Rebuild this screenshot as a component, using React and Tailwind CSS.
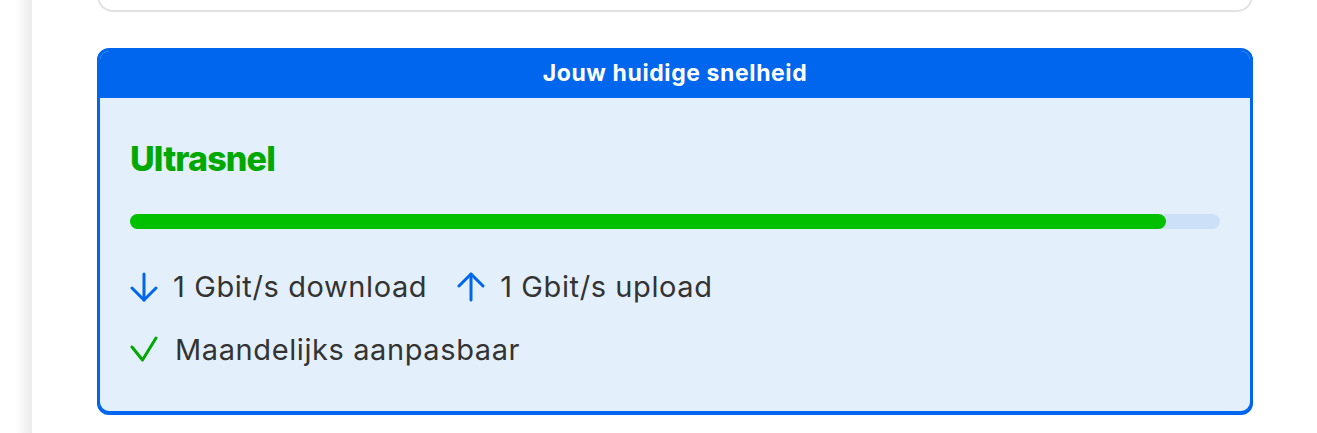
import React from "react";

const ArrowDown = () => (
  <svg width="28" height="30" viewBox="0 0 28 30" fill="none" stroke="#0066EE" strokeWidth="3" strokeLinecap="round" strokeLinejoin="round">
    <path d="M14 2v26" />
    <path d="M2 16l12 12 12-12" />
  </svg>
);

const ArrowUp = () => (
  <svg width="28" height="30" viewBox="0 0 28 30" fill="none" stroke="#0066EE" strokeWidth="3" strokeLinecap="round" strokeLinejoin="round">
    <path d="M14 28V2" />
    <path d="M2 14L14 2l12 12" />
  </svg>
);

const Check = () => (
  <svg width="28" height="28" viewBox="0 0 28 28" fill="none" stroke="#00A800" strokeWidth="3" strokeLinecap="round" strokeLinejoin="round">
    <path d="M2 11l10.5 13L26 2" />
  </svg>
);

const speed = 95;

export default function App() {
  return (
    <div className="flex h-[433px] w-full overflow-hidden bg-white font-['Inter',sans-serif]">
      {/* left page shadow */}
      <div className="w-[32px] shrink-0 bg-gradient-to-r from-white via-white to-[#ebebeb]" />

      <div className="flex-1 pl-[65px] pr-[64px]">
        {/* previous card (only bottom visible) */}
        <div className="mt-[-30px] h-[42px] rounded-[16px] border-2 border-[#e2e2e2] bg-white" />

        {/* current speed card */}
        <div className="mt-[36px] overflow-hidden rounded-[12px] border-[3px] border-[#0066EE] bg-[#E3F0FB] shadow-[0_1px_0_#0066EE]">
          <div className="-mx-[3px] -mt-[3px] flex h-[50px] items-center justify-center bg-[#0066EE]">
            <span className="text-[23px] font-bold tracking-[0.6px] text-white">Jouw huidige snelheid</span>
          </div>

          <div className="px-[30px] pt-[44px] pb-[43px]">
            <h2 className="text-[34px] font-extrabold leading-[34px] tracking-tight text-[#00A800]">Ultrasnel</h2>

            <div className="mt-[38px] h-[15px] w-full rounded-full bg-[#CCE0F7]">
              <div className="h-full rounded-full bg-[#00C000]" style={{ width: `${speed}%` }} />
            </div>

            <div className="mt-[40px] flex items-center text-[29px] leading-[36px] tracking-[0.6px] text-[#333333]">
              <ArrowDown />
              <span className="ml-[15px]">1 Gbit/s download</span>
              <span className="ml-[30px]">
                <ArrowUp />
              </span>
              <span className="ml-[15px]">1 Gbit/s upload</span>
            </div>

            <div className="mt-[27px] flex items-center text-[29px] leading-[36px] tracking-[0.6px] text-[#333333]">
              <Check />
              <span className="ml-[17px]">Maandelijks aanpasbaar</span>
            </div>
          </div>
        </div>
      </div>
    </div>
  );
}
